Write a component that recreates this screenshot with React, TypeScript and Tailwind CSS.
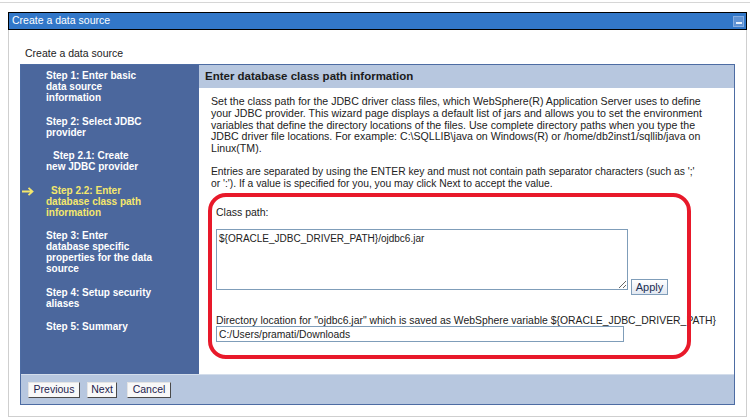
import { useState } from "react";

const navItems = [
  { lines: ["Step 1: Enter basic", "data source", "information"] },
  { lines: ["Step 2: Select JDBC", "provider"] },
  { lines: ["Step 2.1: Create", "new JDBC provider"], indent: "pl-[7px]" },
  {
    lines: ["Step 2.2: Enter", "database class path", "information"],
    indent: "pl-[5px]",
    current: true,
  },
  { lines: ["Step 3: Enter", "database specific", "properties for the data", "source"] },
  { lines: ["Step 4: Setup security", "aliases"] },
  { lines: ["Step 5: Summary"] },
];

const intro = [
  "Set the class path for the JDBC driver class files, which WebSphere(R) Application Server uses to define",
  "your JDBC provider. This wizard page displays a default list of jars and allows you to set the environment",
  "variables that define the directory locations of the files. Use complete directory paths when you type the",
  "JDBC driver file locations. For example: C:\\SQLLIB\\java on Windows(R) or /home/db2inst1/sqllib/java on",
  "Linux(TM).",
];

const entries = [
  "Entries are separated by using the ENTER key and must not contain path separator characters (such as ';'",
  "or ':'). If a value is specified for you, you may click Next to accept the value.",
];

function WizButton({ label, className }: { label: string; className?: string }) {
  return (
    <button
      className={`h-[16px] border border-t-[#e4e4e4] border-l-[#e4e4e4] border-r-[#4a4a4a] border-b-[#4a4a4a] bg-[#f8f8f8] text-[10.5px] leading-none text-[#23234f] ${className ?? ""}`}
    >
      {label}
    </button>
  );
}

export default function App() {
  const [classPath, setClassPath] = useState("${ORACLE_JDBC_DRIVER_PATH}/ojdbc6.jar");
  const [dir, setDir] = useState("C:/Users/pramati/Downloads");

  return (
    <div className="relative w-[750px] h-[418px] overflow-hidden bg-white pt-[2px] font-['Liberation_Sans',Arial,sans-serif] text-[10px] text-[#222]">
      <div className="h-px bg-[#d6d6d6]" />

      {/* Portlet */}
      <div className="mt-[9px] ml-[8px] w-[739px]">
        <div className="flex h-[18px] items-center justify-between border border-black bg-[#3277c8] pl-[3px] pr-[2px] text-[10.5px] text-white">
          <span>Create a data source</span>
          <div className="flex h-[11px] w-[11px] items-end justify-center border border-[#86ade0] bg-[#5f92d3] pb-[2px]">
            <div className="h-[2px] w-[6px] bg-[#e8f0fa]" />
          </div>
        </div>

        <div className="h-[387px] border-x border-b border-[#cfcfcf] pl-[11px] pt-[17px]">
          <div className="pl-[5px] text-[10.5px] leading-[12px]">Create a data source</div>

          {/* Wizard */}
          <div className="mt-[5px] flex h-[341px] w-[715px] flex-col border border-[#4d6ca3]">
            <div className="flex h-[309px]">
              <nav className="w-[178px] bg-[#4b679d] pt-[5px] text-[10px] font-bold leading-[11px] text-white">
                {navItems.map((item, i) => (
                  <div key={i} className="mb-[12.5px] flex">
                    <div className="w-[25px] pl-[1px] pt-[2px]">
                      {item.current && (
                        <svg width="12" height="9" viewBox="0 0 12 9" fill="none">
                          <path d="M0 4.5H10.5M6.5 0.8L10.5 4.5L6.5 8.2" stroke="#f5e76c" strokeWidth="1.8" />
                        </svg>
                      )}
                    </div>
                    <div className={item.current ? "text-[#f5e76c]" : ""}>
                      {item.lines.map((l, j) => (
                        <div key={j} className={`whitespace-nowrap ${j === 0 ? item.indent ?? "" : ""}`}>
                          {l}
                        </div>
                      ))}
                    </div>
                  </div>
                ))}
              </nav>

              <div className="flex-1">
                <div className="flex h-[23px] items-center bg-[#b7c7df] pl-[6px] text-[11.5px] font-bold text-[#1b1b1b]">
                  Enter database class path information
                </div>
                <div className="pl-[12px] pt-[8px] leading-[11.75px]">
                  <div className="text-[10.6px]">
                    {intro.map((l, i) => (
                      <div key={i} className="whitespace-nowrap">
                        {l}
                      </div>
                    ))}
                  </div>
                  <div className="mt-[11px] text-[10.3px]">
                    {entries.map((l, i) => (
                      <div key={i} className="whitespace-nowrap">
                        {l}
                      </div>
                    ))}
                  </div>

                  <div className="mt-[17px] pl-[5px]">
                    <div className="text-[10.5px] leading-[12px]">Class path:</div>
                    <div className="mt-[11px] flex items-start">
                      <textarea
                        value={classPath}
                        onChange={(e) => setClassPath(e.target.value)}
                        className="h-[61px] w-[412px] border border-[#7f9db9] px-[2px] pt-[3px] text-[10px] leading-[12px] text-[#222] outline-none"
                      />
                      <button className="ml-[3px] mt-[50px] h-[16px] w-[37px] border border-[#7f9db9] bg-gradient-to-b from-white to-[#e2e8f1] text-[11px] leading-none text-[#1c2e52]">
                        Apply
                      </button>
                    </div>
                    <div className="mt-[20px] whitespace-nowrap text-[10.4px] leading-[11px]">
                      Directory location for "ojdbc6.jar" which is saved as WebSphere variable ${"{"}ORACLE_JDBC_DRIVER_PATH{"}"}
                    </div>
                    <input
                      value={dir}
                      onChange={(e) => setDir(e.target.value)}
                      className="block h-[16px] w-[408px] border border-[#7f9db9] px-[2px] text-[10.3px] text-[#222] outline-none"
                    />
                  </div>
                </div>
              </div>
            </div>

            <div className="flex h-[30px] items-center border-t border-[#d3ddeb] bg-[#b7c7df] pl-[7px]">
              <WizButton label="Previous" className="w-[52px]" />
              <WizButton label="Next" className="ml-[7px] w-[30px]" />
              <WizButton label="Cancel" className="ml-[10px] w-[44px]" />
            </div>
          </div>
        </div>
      </div>

      {/* red annotation */}
      <div className="pointer-events-none absolute left-[208px] top-[193px] h-[166px] w-[483px] rounded-[18px] border-4 border-[#e8192a]" />
    </div>
  );
}
